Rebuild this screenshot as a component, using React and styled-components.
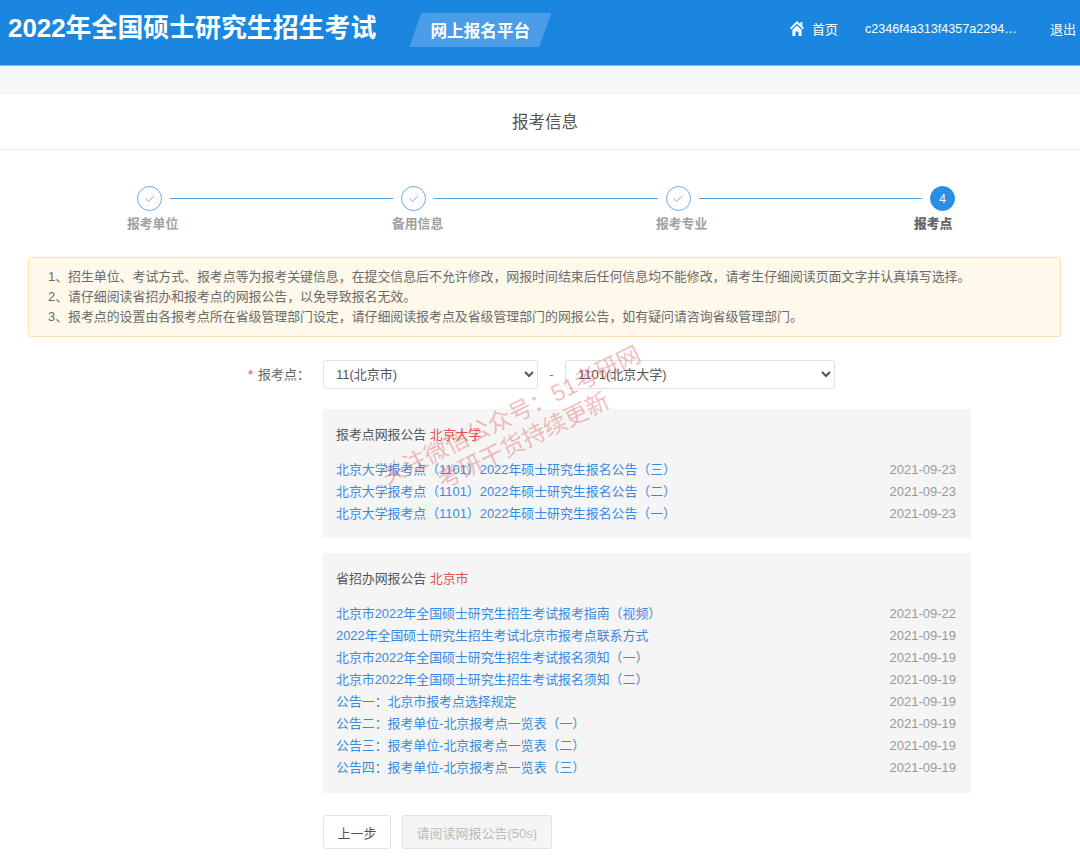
import styled, { createGlobalStyle } from "styled-components";
import { Check } from "lucide-react";

const GlobalStyle = createGlobalStyle`
  html, body {
    margin: 0;
    padding: 0;
    height: 861px;
    overflow: hidden;
    background: #fff;
    color: #555;
    font-family: "Liberation Sans", "Noto Sans CJK SC", Arial, sans-serif;
  }
`;

const schoolNotices = [
  ["北京大学报考点（1101）2022年硕士研究生报名公告（三）", "2021-09-23"],
  ["北京大学报考点（1101）2022年硕士研究生报名公告（二）", "2021-09-23"],
  ["北京大学报考点（1101）2022年硕士研究生报名公告（一）", "2021-09-23"],
];

const cityNotices = [
  ["北京市2022年全国硕士研究生招生考试报考指南（视频）", "2021-09-22"],
  ["2022年全国硕士研究生招生考试北京市报考点联系方式", "2021-09-19"],
  ["北京市2022年全国硕士研究生招生考试报名须知（一）", "2021-09-19"],
  ["北京市2022年全国硕士研究生招生考试报名须知（二）", "2021-09-19"],
  ["公告一：北京市报考点选择规定", "2021-09-19"],
  ["公告二：报考单位-北京报考点一览表（一）", "2021-09-19"],
  ["公告三：报考单位-北京报考点一览表（二）", "2021-09-19"],
  ["公告四：报考单位-北京报考点一览表（三）", "2021-09-19"],
];

function HomeIcon() {
  return (
    <svg width="14" height="15" viewBox="0 0 14 15" fill="#fff">
      <path d="M7 0 14 7 12.8 8.2 7 2.8 1.2 8.2 0 7Z" />
      <path d="M10.4 1h2v4.6l-2-2Z" />
      <path d="M2.4 8.8 7 4.4l4.6 4.4V15H8.6v-4.4H5.4V15h-3Z" />
    </svg>
  );
}

function NoticePanel({ title, place, items }) {
  return (
    <Panel>
      <PanelTitle>
        {title} <em>{place}</em>
      </PanelTitle>
      {items.map(([text, date]) => (
        <NoticeRow key={text}>
          <a>{text}</a>
          <span>{date}</span>
        </NoticeRow>
      ))}
    </Panel>
  );
}

export default function App() {
  return (
    <>
      <GlobalStyle />
      <Header>
        <Brand>
          <h1>2022年全国硕士研究生招生考试</h1>
          <Badge>网上报名平台</Badge>
        </Brand>
        <Nav>
          <HomeLink>
            <HomeIcon />
            首页
          </HomeLink>
          <UserId>c2346f4a313f4357a2294…</UserId>
          <a>退出</a>
        </Nav>
      </Header>
      <Strip />
      <TitleBar>报考信息</TitleBar>
      <Main>
        <Track>
          <Circle>
            <Check size={12} strokeWidth={1.4} />
          </Circle>
          <Line />
          <Circle>
            <Check size={12} strokeWidth={1.4} />
          </Circle>
          <Line />
          <Circle>
            <Check size={12} strokeWidth={1.4} />
          </Circle>
          <Line />
          <Circle $active>4</Circle>
        </Track>
        <Labels>
          <span>报考单位</span>
          <span>备用信息</span>
          <span>报考专业</span>
          <strong>报考点</strong>
        </Labels>
        <Alert>
          <p>1、招生单位、考试方式、报考点等为报考关键信息，在提交信息后不允许修改，网报时间结束后任何信息均不能修改，请考生仔细阅读页面文字并认真填写选择。</p>
          <p>2、请仔细阅读省招办和报考点的网报公告，以免导致报名无效。</p>
          <p>3、报考点的设置由各报考点所在省级管理部门设定，请仔细阅读报考点及省级管理部门的网报公告，如有疑问请咨询省级管理部门。</p>
        </Alert>
        <Form>
          <FieldLabel>
            <i>*</i>报考点：
          </FieldLabel>
          <Selects>
            <Select $width={215} defaultValue="11">
              <option value="11">11(北京市)</option>
            </Select>
            <Dash>-</Dash>
            <Select $width={270} defaultValue="1101">
              <option value="1101">1101(北京大学)</option>
            </Select>
          </Selects>
          <Panels>
            <NoticePanel title="报考点网报公告" place="北京大学" items={schoolNotices} />
            <NoticePanel title="省招办网报公告" place="北京市" items={cityNotices} />
            <Actions>
              <Button>上一步</Button>
              <Button disabled>请阅读网报公告(50s)</Button>
            </Actions>
          </Panels>
          <Watermark>
            <span>关注微信公众号：51考研网</span>
            <span>考研干货持续更新</span>
          </Watermark>
        </Form>
      </Main>
    </>
  );
}

const Header = styled.header`
  height: 57px;
  padding: 0 4px 8px 8px;
  background: #1a86e0;
  border-bottom: 1px solid #7dbcf0;
  display: flex;
  align-items: center;
  justify-content: space-between;
  color: #fff;
`;

const Brand = styled.div`
  display: flex;
  align-items: center;
  gap: 33px;

  h1 {
    margin: 0 0 2px;
    font-size: 25.9px;
    font-weight: 700;
    line-height: 34px;
  }
`;

const Badge = styled.div`
  width: 142px;
  height: 34px;
  margin-top: 3px;
  display: flex;
  align-items: center;
  justify-content: center;
  font-size: 16.6px;
  font-weight: 700;
  background: #4c9de8;
  clip-path: polygon(12px 0, 100% 0, 130px 100%, 0 100%);
`;

const Nav = styled.nav`
  display: flex;
  align-items: center;
  font-size: 13px;
`;

const HomeLink = styled.a`
  display: flex;
  align-items: center;
  gap: 8px;
  margin-right: 27px;
`;

const UserId = styled.span`
  width: 155px;
  margin-right: 30px;
  font-size: 12.6px;
  white-space: nowrap;
`;

const Strip = styled.div`
  height: 27px;
  background: #f5f7f8;
  border-bottom: 1px solid #e9ecee;
`;

const TitleBar = styled.div`
  height: 53px;
  padding: 0 0 2px 10px;
  display: flex;
  align-items: center;
  justify-content: center;
  font-size: 16.5px;
  color: #555;
  border-bottom: 1px solid #eeeeee;
`;

const Main = styled.main`
  padding: 36px 19px 0 28px;
`;

const Track = styled.div`
  display: flex;
  align-items: center;
  padding: 0 106px 0 109px;
`;

const Circle = styled.div`
  width: 25px;
  height: 25px;
  box-sizing: border-box;
  flex: none;
  border-radius: 50%;
  border: 1px solid ${(p) => (p.$active ? "#2a8fe4" : "#6aaee8")};
  background: ${(p) => (p.$active ? "#2a8fe4" : "#fff")};
  color: ${(p) => (p.$active ? "#fff" : "#5f8fb5")};
  display: flex;
  align-items: center;
  justify-content: center;
  font-size: 12px;
`;

const Line = styled.div`
  flex: 1;
  height: 1px;
  margin: 0 8px;
  background: #4d9fe6;
`;

const Labels = styled.div`
  display: grid;
  grid-template-columns: 265px 264px 258px auto;
  padding-left: 99px;
  margin-top: 4px;
  font-size: 12.8px;
  line-height: 18px;
  font-weight: 700;
  color: #a0a0a0;

  strong {
    color: #666;
  }
`;

const Alert = styled.div`
  margin-top: 24px;
  height: 69px;
  padding: 9px 18px 0 19px;
  background: #fef9ea;
  border: 1px solid #f8e3ae;
  border-radius: 3px;
  font-size: 12.9px;
  line-height: 20px;
  color: #6b6b6b;

  p {
    margin: 0;
  }
`;

const Form = styled.div`
  position: relative;
  display: grid;
  grid-template-columns: 282px auto;
  column-gap: 12px;
  margin-top: 22px;
`;

const FieldLabel = styled.label`
  margin-top: 1px;
  font-size: 13px;
  line-height: 29px;
  text-align: right;
  color: #666;

  i {
    font-style: normal;
    color: #e4513a;
    margin-right: 5px;
  }
`;

const Selects = styled.div`
  display: flex;
  align-items: center;
  margin-left: 1px;
`;

const Dash = styled.span`
  width: 27px;
  text-align: center;
  font-size: 13px;
  color: #777;
`;

const Select = styled.select`
  width: ${(p) => p.$width}px;
  height: 29px;
  padding: 0 8px;
  font: 13px "Liberation Sans", "Noto Sans CJK SC", sans-serif;
  color: #555;
  background: #fff;
  border: 1px solid #e2e2e2;
  border-radius: 3px;
`;

const Panels = styled.div`
  grid-column: 2;
  margin-top: 20px;
  width: 649px;
`;

const Panel = styled.section`
  background: #f5f5f5;
  padding: 15px 15px 13.5px 14px;
  margin-bottom: 15px;
`;

const PanelTitle = styled.div`
  font-size: 12.9px;
  line-height: 22px;
  margin-bottom: 12.5px;
  color: #555;

  em {
    font-style: normal;
    color: #e5504a;
  }
`;

const NoticeRow = styled.div`
  display: flex;
  justify-content: space-between;
  font-size: 12.9px;
  line-height: 22.1px;

  a {
    color: #3a8ae0;
  }

  span {
    font-size: 13px;
    color: #999;
  }
`;

const Actions = styled.div`
  display: flex;
  gap: 11px;
  margin: 22px 0 0 1px;
`;

const Button = styled.button`
  height: 34px;
  padding: 0 13.5px;
  font: 13px "Liberation Sans", "Noto Sans CJK SC", sans-serif;
  color: ${(p) => (p.disabled ? "#bbb" : "#555")};
  background: ${(p) => (p.disabled ? "#f5f5f5" : "#fff")};
  border: 1px solid #e2e2e2;
  border-radius: 3px;
`;

const Watermark = styled.div`
  position: absolute;
  left: 347px;
  top: 41px;
  display: flex;
  flex-direction: column;
  align-items: center;
  transform: rotate(-26deg);
  font-size: 23.5px;
  line-height: 28px;
  white-space: nowrap;
  color: rgba(230, 80, 80, 0.38);
  pointer-events: none;
`;
